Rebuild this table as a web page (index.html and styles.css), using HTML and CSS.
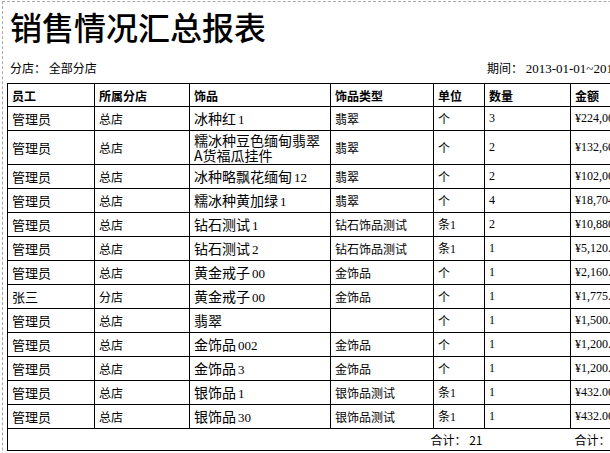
FILE: index.html
```html
<!DOCTYPE html>
<html lang="zh-CN">
<head>
<meta charset="utf-8">
<title>销售情况汇总报表</title>
<link rel="stylesheet" href="styles.css">
</head>
<body>
<div class="page">
  <h1 class="title">销售情况汇总报表</h1>
  <div class="info">
    <div class="info-left">分店：&nbsp;全部分店</div>
    <div class="info-right">期间：&nbsp;<span class="num">2013-01-01~2013-12-31</span></div>
  </div>
  <table class="report">
    <colgroup>
      <col class="c-emp"><col class="c-shop"><col class="c-item"><col class="c-type"><col class="c-unit"><col class="c-qty"><col class="c-amt">
    </colgroup>
    <thead>
      <tr><th>员工</th><th>所属分店</th><th>饰品</th><th>饰品类型</th><th>单位</th><th>数量</th><th>金额</th></tr>
    </thead>
    <tbody>
      <tr><td class="emp">管理员</td><td>总店</td><td class="item">冰种红<span class="num">1</span></td><td>翡翠</td><td>个</td><td class="num">3</td><td class="num">¥224,000.00</td></tr>
      <tr class="tall"><td class="emp">管理员</td><td>总店</td><td class="item">糯冰种豆色缅甸翡翠A货福瓜挂件</td><td>翡翠</td><td>个</td><td class="num">2</td><td class="num">¥132,600.00</td></tr>
      <tr><td class="emp">管理员</td><td>总店</td><td class="item">冰种略飘花缅甸<span class="num">12</span></td><td>翡翠</td><td>个</td><td class="num">2</td><td class="num">¥102,000.00</td></tr>
      <tr><td class="emp">管理员</td><td>总店</td><td class="item">糯冰种黄加绿<span class="num">1</span></td><td>翡翠</td><td>个</td><td class="num">4</td><td class="num">¥18,704.00</td></tr>
      <tr><td class="emp">管理员</td><td>总店</td><td class="item">钻石测试<span class="num">1</span></td><td>钻石饰品测试</td><td>条<span class="num">1</span></td><td class="num">2</td><td class="num">¥10,880.00</td></tr>
      <tr><td class="emp">管理员</td><td>总店</td><td class="item">钻石测试<span class="num">2</span></td><td>钻石饰品测试</td><td>条<span class="num">1</span></td><td class="num">1</td><td class="num">¥5,120.00</td></tr>
      <tr><td class="emp">管理员</td><td>总店</td><td class="item">黄金戒子<span class="num">00</span></td><td>金饰品</td><td>个</td><td class="num">1</td><td class="num">¥2,160.00</td></tr>
      <tr><td class="emp">张三</td><td>分店</td><td class="item">黄金戒子<span class="num">00</span></td><td>金饰品</td><td>个</td><td class="num">1</td><td class="num">¥1,775.00</td></tr>
      <tr><td class="emp">管理员</td><td>总店</td><td class="item">翡翠</td><td></td><td>个</td><td class="num">1</td><td class="num">¥1,500.00</td></tr>
      <tr><td class="emp">管理员</td><td>总店</td><td class="item">金饰品<span class="num">002</span></td><td>金饰品</td><td>个</td><td class="num">1</td><td class="num">¥1,200.00</td></tr>
      <tr><td class="emp">管理员</td><td>总店</td><td class="item">金饰品<span class="num">3</span></td><td>金饰品</td><td>个</td><td class="num">1</td><td class="num">¥1,200.00</td></tr>
      <tr><td class="emp">管理员</td><td>总店</td><td class="item">银饰品<span class="num">1</span></td><td>银饰品测试</td><td>条<span class="num">1</span></td><td class="num">1</td><td class="num">¥432.00</td></tr>
      <tr><td class="emp">管理员</td><td>总店</td><td class="item">银饰品<span class="num">30</span></td><td>银饰品测试</td><td>条<span class="num">1</span></td><td class="num">1</td><td class="num">¥432.00</td></tr>
    </tbody>
    <tfoot>
      <tr class="total"><td colspan="5" class="sum-qty">合计：&nbsp;21</td><td></td><td class="sum-amt">合计：&nbsp;¥501,003.00</td></tr>
    </tfoot>
  </table>
</div>
</body>
</html>
```

FILE: styles.css
```css
html, body {
  margin: 0;
  padding: 0;
  overflow: hidden;
  background: #ffffff;
}

body {
  font-family: "Noto Sans CJK SC", "Noto Sans", sans-serif;
  color: #000000;
}

.page {
  margin: 1px 0 0 2px;
  width: 800px;
  height: 600px;
  border: 1px dashed #a8a8a8;
  padding: 8px 0 0 4px;
  box-sizing: border-box;
}

.title {
  margin: 0 0 0 3px;
  font-size: 32px;
  line-height: 32px;
  font-weight: 500;
  letter-spacing: 0;
}

.info {
  display: flex;
  margin-top: 18px;
  font-size: 12px;
  line-height: 16px;
  padding-left: 3px;
}

.info-left {
  width: 477px;
}

.info-right .num {
  font-family: "Liberation Serif", serif;
  font-size: 13px;
}

.num {
  font-family: "Liberation Serif", serif;
}

.report {
  margin-top: 6px;
  border-collapse: collapse;
  table-layout: fixed;
  width: 700px;
  font-size: 12px;
}

.c-emp { width: 87px; }
.c-shop { width: 95px; }
.c-item { width: 141px; }
.c-type { width: 103px; }
.c-unit { width: 51px; }
.c-qty { width: 86px; }
.c-amt { width: 137px; }

.report th,
.report td {
  border: 1px solid #000000;
  padding: 0 4px;
  text-align: left;
  vertical-align: middle;
  white-space: nowrap;
  overflow: hidden;
}

.report th {
  height: 22px;
  font-weight: 700;
  font-size: 12px;
}

.report td {
  height: 23px;
  line-height: 15px;
}

.report td.emp {
  font-size: 13px;
}

.report td.item {
  font-size: 14px;
  white-space: normal;
}

.report td.item .num {
  font-size: 13px;
  margin-left: 2px;
}

.report td.num {
  font-size: 12px;
}

.report tr.tall td {
  height: 33px;
}

.report tr.tall td.item {
  line-height: 15px;
}

.report tfoot td {
  height: 21px;
  border-left: none;
  border-right: none;
  font-size: 12px;
}

.report tfoot td:first-child {
  border-left: 1px solid #000000;
}

.report tfoot td.sum-qty {
  text-align: right;
  padding-right: 2px;
}
```
